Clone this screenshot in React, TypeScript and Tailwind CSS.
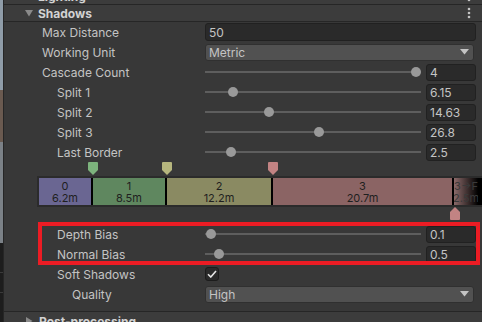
import React from "react";

const Dots = () => (
  <svg width="4" height="12" viewBox="0 0 4 12" className="block">
    <circle cx="2" cy="2" r="1.3" fill="#c4c4c4" />
    <circle cx="2" cy="6" r="1.3" fill="#c4c4c4" />
    <circle cx="2" cy="10" r="1.3" fill="#c4c4c4" />
  </svg>
);

const Caret = () => (
  <svg width="9" height="6" viewBox="0 0 9 6" className="block">
    <path d="M0 0 H9 L4.5 5.5 Z" fill="#c4c4c4" />
  </svg>
);

function Label({ text, indent }: { text: string; indent: number }) {
  const pl = indent === 0 ? "pl-[38px]" : indent === 1 ? "pl-[53px]" : "pl-[68px]";
  return <div className={`w-[201px] shrink-0 ${pl} pt-[2px] text-[12px] text-[#c4c4c4] leading-none`}>{text}</div>;
}

function Field({ value, w }: { value: string; w: string }) {
  return (
    <div className={`${w} shrink-0 bg-[#2a2a2a] border border-[#212121] rounded-[3px] flex items-center pl-[3px] pt-[2px] text-[12px] text-[#c4c4c4] leading-none`}>
      {value}
    </div>
  );
}

function SliderRow({ label, indent, pos, value }: { label: string; indent: number; pos: number; value: string }) {
  return (
    <div className="h-[20px] shrink-0 flex items-center">
      <Label text={label} indent={indent} />
      <div className="relative w-[216px] shrink-0 h-full flex items-center">
        <div className="w-full h-[2px] bg-[#5e5e5e]" />
        <div className="absolute top-[5px] w-[10px] h-[10px] rounded-full bg-[#999999]" style={{ left: pos - 5 }} />
      </div>
      <div className="ml-[5px] shrink-0">
        <Field value={value} w="w-[50px] h-[17px]" />
      </div>
    </div>
  );
}

function Dropdown({ value }: { value: string }) {
  return (
    <div className="w-[269px] h-[17px] shrink-0 bg-[#515151] border border-[#303030] rounded-[3px] flex items-center justify-between pl-[3px] pr-[4px] text-[12px] text-[#c4c4c4] leading-none">
      <span className="pt-[2px]">{value}</span>
      <Caret />
    </div>
  );
}

const Pin = ({ color, up }: { color: string; up?: boolean }) => (
  <svg width="10" height="13" viewBox="0 0 10 13" className="block">
    <path
      d={up ? "M5 0 L10 5 V12 Q10 13 9 13 H1 Q0 13 0 12 V5 Z" : "M1 0 H9 Q10 0 10 1 V8 L5 13 L0 8 V1 Q0 0 1 0 Z"}
      fill={color}
    />
  </svg>
);

function Seg({ w, bg, a, b }: { w: string; bg: string; a: string; b: string }) {
  return (
    <div className={`${w} ${bg} h-full shrink-0 flex flex-col items-center justify-center pt-[1px] text-[11px] leading-[12px] text-[#1f1f1f]`}>
      <span>{a}</span>
      <span>{b}</span>
    </div>
  );
}

const Sep = () => <div className="w-[2px] h-full bg-black shrink-0" />;

export default function App() {
  return (
    <div className="w-[482px] h-[322px] overflow-hidden flex font-['Inter',sans-serif] bg-[#383838] relative">
      <div className="w-[4px] h-full shrink-0 flex flex-col border-r border-[#262626]">
        <div className="h-[90px] shrink-0 bg-[#8f9ca8]" />
        <div className="h-[52px] shrink-0 bg-[#6a5a50]" />
        <div className="h-[101px] shrink-0 bg-[#7b8187]" />
        <div className="h-[30px] shrink-0 bg-[#1d1d1d] border-b border-[#3a3a3a]" />
        <div className="h-[20px] shrink-0 bg-[#1d1d1d] border-b border-[#3a3a3a]" />
        <div className="flex-1 bg-[#1d1d1d]" />
      </div>
      <div className="flex-1 flex flex-col min-w-0">
        <div className="h-[17px] -mt-[12px] shrink-0 flex items-center border-b border-[#262626] bg-[#3c3c3c]">
          <div className="w-[34px] shrink-0" />
          <span className="text-[12px] font-bold text-[#d2d2d2] leading-none pt-[2px]">Lighting</span>
          <div className="ml-auto mr-[11px]">
            <Dots />
          </div>
        </div>
        <div className="h-[17px] shrink-0 flex items-center border-b border-[#262626] bg-[#3c3c3c]">
          <div className="w-[21px] shrink-0" />
          <svg width="8" height="7" viewBox="0 0 8 7" className="block">
            <path d="M0 0 H8 L4 6.5 Z" fill="#8a8a8a" />
          </svg>
          <div className="w-[5px] shrink-0" />
          <span className="text-[12px] font-bold text-[#d2d2d2] leading-none pt-[2px]">Shadows</span>
          <div className="ml-auto mr-[11px]">
            <Dots />
          </div>
        </div>

        <div className="h-[20px] shrink-0 flex items-center">
          <Label text="Max Distance" indent={0} />
          <Field value="50" w="w-[271px] h-[18px]" />
        </div>
        <div className="h-[20px] shrink-0 flex items-center">
          <Label text="Working Unit" indent={0} />
          <Dropdown value="Metric" />
        </div>
        <SliderRow label="Cascade Count" indent={0} pos={211} value="4" />
        <SliderRow label="Split 1" indent={1} pos={28} value="6.15" />
        <SliderRow label="Split 2" indent={1} pos={64} value="14.63" />
        <SliderRow label="Split 3" indent={1} pos={114} value="26.8" />
        <SliderRow label="Last Border" indent={1} pos={26} value="2.5" />

        <div className="relative h-[14px] shrink-0">
          <div className="absolute left-[84px] top-0"><Pin color="#7db37d" /></div>
          <div className="absolute left-[158px] top-0"><Pin color="#b6b67e" /></div>
          <div className="absolute left-[264px] top-0"><Pin color="#c28383" /></div>
        </div>
        <div className="ml-[33px] h-[31px] w-[460px] shrink-0 border-2 border-[#2b2b2b] flex overflow-hidden">
          <Seg w="w-[52px]" bg="bg-[#6a6692]" a="0" b="6.2m" />
          <Sep />
          <Seg w="w-[72px]" bg="bg-[#5f875f]" a="1" b="8.5m" />
          <Sep />
          <Seg w="w-[104px]" bg="bg-[#8a8a62]" a="2" b="12.2m" />
          <Sep />
          <Seg w="w-[179px]" bg="bg-[#8b6464]" a="3" b="20.7m" />
          <Sep />
          <div className="w-[24px] h-full shrink-0 overflow-hidden bg-[linear-gradient(to_right,#8b6a6a,#000000)] flex flex-col items-center justify-center pt-[1px] text-[11px] leading-[12px] text-[#3a3a3a]">
            <span className="whitespace-nowrap">3→F</span>
            <span className="whitespace-nowrap">2.5m</span>
          </div>
          <div className="flex-1 bg-black" />
        </div>
        <div className="relative h-[17px] shrink-0">
          <div className="absolute left-[446px] top-0"><Pin color="#c28383" up /></div>
        </div>

        <SliderRow label="Depth Bias" indent={1} pos={6} value="0.1" />
        <SliderRow label="Normal Bias" indent={1} pos={14} value="0.5" />
        <div className="h-[20px] shrink-0 flex items-center">
          <Label text="Soft Shadows" indent={1} />
          <div className="w-[14px] h-[14px] shrink-0 bg-[#2a2a2a] border border-[#1c1c1c] rounded-[3px] flex items-center justify-center">
            <svg width="10" height="8" viewBox="0 0 10 8" className="block">
              <path d="M1 4.2 L3.8 7 L9 1" stroke="#e6e6e6" strokeWidth="1.6" fill="none" />
            </svg>
          </div>
        </div>
        <div className="h-[20px] shrink-0 flex items-center">
          <Label text="Quality" indent={2} />
          <Dropdown value="High" />
        </div>
        <div className="h-[7px] shrink-0" />
        <div className="h-[18px] shrink-0 flex items-center border-t border-[#262626] bg-[#3c3c3c]">
          <div className="w-[22px] shrink-0" />
          <svg width="7" height="8" viewBox="0 0 7 8" className="block">
            <path d="M0 0 V8 L6.5 4 Z" fill="#8a8a8a" />
          </svg>
          <div className="w-[6px] shrink-0" />
          <span className="text-[12px] font-bold text-[#d2d2d2] leading-none pt-[2px]">Post-processing</span>
        </div>
      </div>

      <div className="absolute left-[38px] top-[222px] w-[442px] h-[43px] border-4 border-[#ec1c24] pointer-events-none" />
    </div>
  );
}
